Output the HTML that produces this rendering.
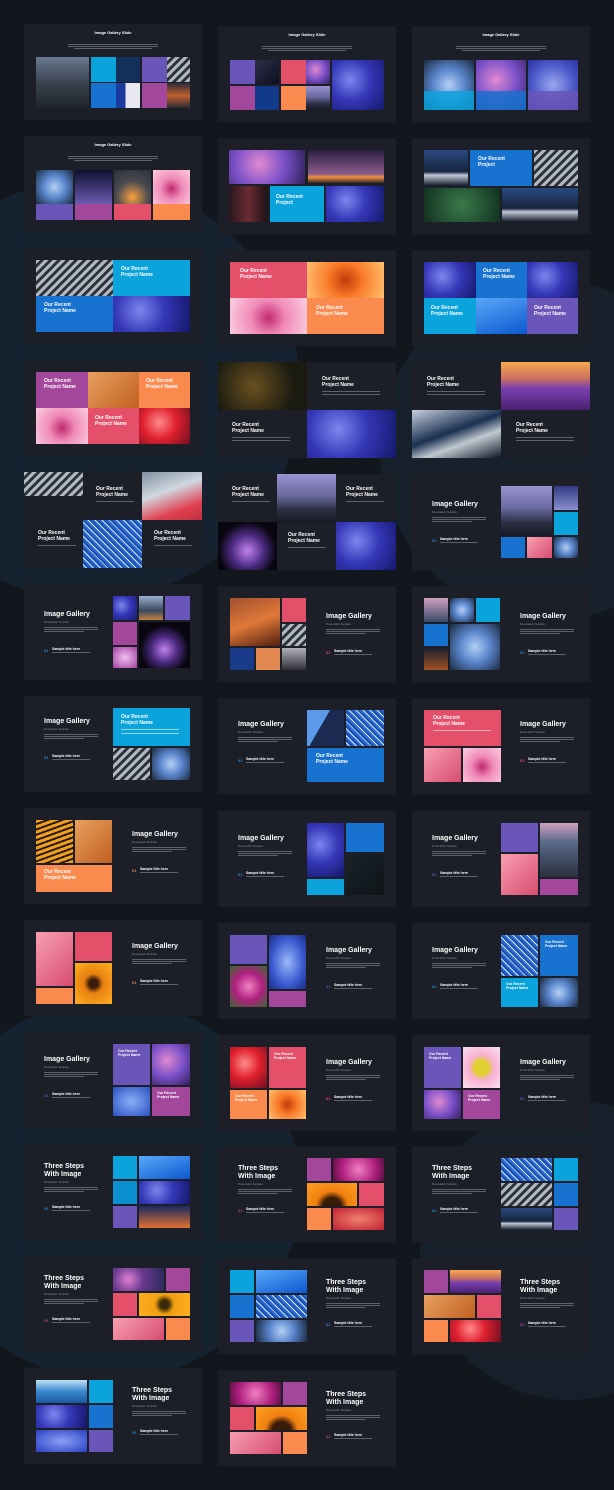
<!DOCTYPE html>
<html><head><meta charset="utf-8"><style>
*{margin:0;padding:0;box-sizing:border-box}
body{width:614px;height:1490px;overflow:hidden;background:#12161d;position:relative;font-family:"Liberation Sans",sans-serif}
.bg{position:absolute;border-radius:50%}
.s{position:absolute;width:178px;height:96px;background:#1c1f27;overflow:hidden}
.s div{position:absolute}
.h{color:#fff;font-weight:bold;font-size:7px;line-height:8px;white-space:nowrap}
.h2{color:#fff;font-weight:bold;font-size:3.5px;white-space:nowrap}
.hs{color:#fff;font-weight:bold;font-size:5px;line-height:6px;white-space:nowrap}
.sub{color:#8a8e98;font-size:2.5px;white-space:nowrap}
.ln{height:1px;background:#5d616b}
.lw{height:1px;background:rgba(255,255,255,.55)}
.n{font-size:4px;font-weight:bold;color:#2a8ad0}
.C{background:#0ba3dc}.B{background:#1872cf}.P{background:#6a55b8}.M{background:#a3479d}.R{background:#e4506a}.O{background:#fb8a4e}
.fb{background:radial-gradient(circle at 35% 40%,#7d86ee,#3538b8 45%,#14186a)}
.hy{background:radial-gradient(circle at 50% 50%,#b4d0f4,#5a86cc 45%,#1a2a40)}
.mt{background:linear-gradient(#9a92d0,#6a6aa0 45%,#2a2e40 75%,#161a28)}
.dk{background:linear-gradient(135deg,#2a2e48,#0e1020)}
.gr{background:repeating-linear-gradient(135deg,#b0b6c0 0 3px,#2a3038 3px 6px)}
.pk{background:radial-gradient(circle at 50% 55%,#c02a70,#f08ab8 40%,#fbd0e0)}
.pp{background:linear-gradient(135deg,#f7a0b0,#d84c70)}
.or{background:radial-gradient(circle,#c03a08,#f87a28 40%,#ffc070)}
.su{background:radial-gradient(circle,#3a1a08 15%,#e88010 35%,#ffb020)}
.rf{background:radial-gradient(circle at 40% 40%,#ff8a8a,#e02030 45%,#701020)}
.bl{background:linear-gradient(160deg,#5aa8f8,#0a58d0)}
.bb{background:repeating-linear-gradient(45deg,#2a6ad0 0 2px,#cfe4ff 2px 3px,#1a50b0 3px 5px)}
.lv{background:linear-gradient(#f8a850,#c87060 35%,#7a40b0 55%,#4a2070)}
.pg{background:radial-gradient(circle at 40% 40%,#e08ad0,#7a50c8 50%,#30205a)}
.sky{background:linear-gradient(#2a2040,#8a5a8a 70%,#f09040 80%,#101828)}
.og{background:linear-gradient(135deg,#e8a060,#c06020)}
.gn{background:radial-gradient(circle,#3a7a4a,#123020)}
.nm{background:linear-gradient(#2a4a80,#16243e 60%,#c0c8d8 70%,#101828)}
.cy{background:linear-gradient(160deg,#a05030,#e07838 50%,#502010)}
</style></head><body>
<div class="bg" style="left:-120px;top:180px;width:420px;height:420px;background:#16222f"></div>
<div class="bg" style="left:380px;top:280px;width:340px;height:340px;background:#17212c"></div>
<div class="bg" style="left:-80px;top:1000px;width:380px;height:380px;background:#152330"></div>
<div class="bg" style="left:420px;top:1100px;width:300px;height:300px;background:#16202b"></div>

<!-- Row 0 -->
<div class="s" style="left:24px;top:24px">
<div class="hs" style="left:0;width:178px;text-align:center;top:6px;font-size:4px">Image Gallery Slide</div>
<div class="ln" style="left:44px;top:20px;width:90px"></div><div class="ln" style="left:44px;top:22px;width:90px"></div><div class="ln" style="left:50px;top:24px;width:78px"></div>
<div class="mt" style="left:12px;top:33px;width:53px;height:51px;background:linear-gradient(#6a7890,#3a4450 50%,#1e2428)"></div>
<div class="C" style="left:67px;top:33px;width:25px;height:25px"></div><div class="dk" style="left:92px;top:33px;width:24px;height:25px;background:#12305a"></div>
<div class="P" style="left:118px;top:33px;width:25px;height:25px"></div><div class="gr" style="left:143px;top:33px;width:23px;height:25px"></div>
<div class="B" style="left:67px;top:59px;width:25px;height:25px"></div><div style="left:92px;top:59px;width:24px;height:25px;background:linear-gradient(90deg,#1a3aa0 40%,#e8e8f0 40%)"></div>
<div class="M" style="left:118px;top:59px;width:25px;height:25px"></div><div style="left:143px;top:59px;width:23px;height:25px;background:linear-gradient(#2a2a38,#c06030 50%,#2a2a30)"></div>
</div>
<div class="s" style="left:218px;top:26px">
<div class="hs" style="left:0;width:178px;text-align:center;top:6px;font-size:4px">Image Gallery Slide</div>
<div class="ln" style="left:44px;top:20px;width:90px"></div><div class="ln" style="left:44px;top:22px;width:90px"></div><div class="ln" style="left:50px;top:24px;width:78px"></div>
<div class="P" style="left:12px;top:34px;width:25px;height:24px"></div><div class="dk" style="left:37px;top:34px;width:24px;height:24px"></div>
<div class="R" style="left:63px;top:34px;width:25px;height:24px"></div><div class="pg" style="left:88px;top:34px;width:24px;height:24px"></div>
<div class="M" style="left:12px;top:60px;width:25px;height:24px"></div><div class="bl" style="left:37px;top:60px;width:24px;height:24px;background:#123a8a"></div>
<div class="O" style="left:63px;top:60px;width:25px;height:24px"></div><div class="mt" style="left:88px;top:60px;width:24px;height:24px"></div>
<div class="fb" style="left:114px;top:34px;width:52px;height:50px"></div>
</div>
<div class="s" style="left:412px;top:26px">
<div class="hs" style="left:0;width:178px;text-align:center;top:6px;font-size:4px">Image Gallery Slide</div>
<div class="ln" style="left:44px;top:20px;width:90px"></div><div class="ln" style="left:44px;top:22px;width:90px"></div><div class="ln" style="left:50px;top:24px;width:78px"></div>
<div class="hy" style="left:12px;top:34px;width:50px;height:50px"></div><div class="pg" style="left:64px;top:34px;width:50px;height:50px"></div><div class="fb" style="left:116px;top:34px;width:50px;height:50px;background:radial-gradient(circle,#9aa8f0,#4a58c8 60%,#2a30a0)"></div>
<div style="left:12px;top:65px;width:50px;height:19px;background:rgba(11,163,220,.85)"></div><div style="left:64px;top:65px;width:50px;height:19px;background:rgba(24,114,207,.85)"></div><div style="left:116px;top:65px;width:50px;height:19px;background:rgba(106,85,184,.85)"></div>
</div>

<!-- Row 1 -->
<div class="s" style="left:24px;top:136px">
<div class="hs" style="left:0;width:178px;text-align:center;top:6px;font-size:4px">Image Gallery Slide</div>
<div class="ln" style="left:44px;top:20px;width:90px"></div><div class="ln" style="left:44px;top:22px;width:90px"></div><div class="ln" style="left:50px;top:24px;width:78px"></div>
<div class="hy" style="left:12px;top:34px;width:37px;height:34px"></div><div class="P" style="left:12px;top:68px;width:37px;height:16px"></div>
<div class="dk" style="left:51px;top:34px;width:37px;height:34px;background:linear-gradient(#101030,#6a5ab0)"></div><div class="M" style="left:51px;top:68px;width:37px;height:16px"></div>
<div style="left:90px;top:34px;width:37px;height:34px;background:radial-gradient(circle at 50% 80%,#f8a040,#4a4a50 50%,#2a3038)"></div><div class="R" style="left:90px;top:68px;width:37px;height:16px"></div>
<div class="pk" style="left:129px;top:34px;width:37px;height:34px"></div><div class="O" style="left:129px;top:68px;width:37px;height:16px"></div>
</div>
<div class="s" style="left:218px;top:138px">
<div class="pg" style="left:11px;top:12px;width:76px;height:34px"></div><div class="sky" style="left:90px;top:12px;width:76px;height:34px"></div>
<div style="left:11px;top:48px;width:39px;height:36px;background:linear-gradient(90deg,#2a1820,#6a2a30,#1a1418)"></div>
<div class="C" style="left:52px;top:48px;width:54px;height:36px"></div><div class="hs" style="left:58px;top:56px">Our Recent<br>Project</div>
<div class="fb" style="left:108px;top:48px;width:58px;height:36px"></div>
</div>
<div class="s" style="left:412px;top:138px">
<div class="nm" style="left:12px;top:12px;width:44px;height:36px"></div><div class="B" style="left:58px;top:12px;width:62px;height:36px"></div><div class="hs" style="left:66px;top:18px">Our Recent<br>Project</div>
<div class="gr" style="left:122px;top:12px;width:44px;height:36px"></div>
<div class="gn" style="left:12px;top:50px;width:76px;height:34px"></div><div class="nm" style="left:90px;top:50px;width:76px;height:34px"></div>
</div>

<!-- Row 2 -->
<div class="s" style="left:24px;top:248px">
<div class="gr" style="left:12px;top:12px;width:77px;height:36px"></div><div class="C" style="left:89px;top:12px;width:77px;height:36px"></div><div class="hs" style="left:97px;top:18px">Our Recent<br>Project Name</div>
<div class="B" style="left:12px;top:48px;width:77px;height:36px"></div><div class="hs" style="left:20px;top:54px">Our Recent<br>Project Name</div><div class="fb" style="left:89px;top:48px;width:77px;height:36px"></div>
</div>
<div class="s" style="left:218px;top:250px">
<div class="R" style="left:12px;top:12px;width:77px;height:36px"></div><div class="hs" style="left:22px;top:18px">Our Recent<br>Project Name</div><div class="or" style="left:89px;top:12px;width:77px;height:36px"></div>
<div class="pk" style="left:12px;top:48px;width:77px;height:36px"></div><div class="O" style="left:89px;top:48px;width:77px;height:36px"></div><div class="hs" style="left:98px;top:55px">Our Recent<br>Project Name</div>
</div>
<div class="s" style="left:412px;top:250px">
<div class="fb" style="left:12px;top:12px;width:52px;height:36px"></div><div class="B" style="left:64px;top:12px;width:51px;height:36px"></div><div class="hs" style="left:71px;top:18px">Our Recent<br>Project Name</div><div class="fb" style="left:115px;top:12px;width:51px;height:36px"></div>
<div class="C" style="left:12px;top:48px;width:52px;height:36px"></div><div class="hs" style="left:19px;top:55px">Our Recent<br>Project Name</div><div class="bl" style="left:64px;top:48px;width:51px;height:36px"></div><div class="P" style="left:115px;top:48px;width:51px;height:36px"></div><div class="hs" style="left:122px;top:55px">Our Recent<br>Project Name</div>
</div>

<!-- Row 3 -->
<div class="s" style="left:24px;top:360px">
<div class="M" style="left:12px;top:12px;width:52px;height:36px"></div><div class="hs" style="left:20px;top:18px">Our Recent<br>Project Name</div><div class="og" style="left:64px;top:12px;width:51px;height:36px"></div><div class="O" style="left:115px;top:12px;width:51px;height:36px"></div><div class="hs" style="left:122px;top:18px">Our Recent<br>Project Name</div>
<div class="pk" style="left:12px;top:48px;width:52px;height:36px"></div><div class="R" style="left:64px;top:48px;width:51px;height:36px"></div><div class="hs" style="left:71px;top:55px">Our Recent<br>Project Name</div><div class="rf" style="left:115px;top:48px;width:51px;height:36px"></div>
</div>
<div class="s" style="left:218px;top:362px">
<div style="left:0;top:0;width:89px;height:48px;background:radial-gradient(circle at 40% 50%,#6a5020,#1a1a10 70%)"></div><div class="hs" style="left:104px;top:14px">Our Recent<br>Project Name</div>
<div class="ln" style="left:104px;top:29px;width:58px"></div><div class="ln" style="left:104px;top:32px;width:58px"></div>
<div class="hs" style="left:14px;top:60px">Our Recent<br>Project Name</div><div class="ln" style="left:14px;top:75px;width:58px"></div><div class="ln" style="left:14px;top:78px;width:58px"></div>
<div class="fb" style="left:89px;top:48px;width:89px;height:48px"></div>
</div>
<div class="s" style="left:412px;top:362px">
<div class="hs" style="left:15px;top:14px">Our Recent<br>Project Name</div><div class="ln" style="left:15px;top:29px;width:58px"></div><div class="ln" style="left:15px;top:32px;width:58px"></div>
<div class="lv" style="left:89px;top:0;width:89px;height:48px"></div>
<div class="nm" style="left:0;top:48px;width:89px;height:48px;background:linear-gradient(160deg,#c8d0e0,#1a3050 45%,#c0c8d0 65%,#101828)"></div>
<div class="hs" style="left:104px;top:60px">Our Recent<br>Project Name</div><div class="ln" style="left:104px;top:75px;width:58px"></div><div class="ln" style="left:104px;top:78px;width:58px"></div>
</div>

<!-- Row 4 -->
<div class="s" style="left:24px;top:472px">
<div class="gr" style="left:0;top:0;width:59px;height:24px"></div><div class="hs" style="left:72px;top:14px">Our Recent<br>Project Name</div>
<div style="left:118px;top:0;width:60px;height:48px;background:linear-gradient(160deg,#8090a0,#d0d8e0 40%,#e04050 75%,#c03040)"></div>
<div class="hs" style="left:14px;top:58px">Our Recent<br>Project Name</div><div class="bb" style="left:59px;top:48px;width:59px;height:48px"></div><div class="hs" style="left:130px;top:58px">Our Recent<br>Project Name</div>
<div class="ln" style="left:14px;top:73px;width:38px"></div><div class="ln" style="left:130px;top:73px;width:38px"></div><div class="ln" style="left:72px;top:29px;width:38px"></div>
</div>
<div class="s" style="left:218px;top:474px">
<div class="hs" style="left:14px;top:12px">Our Recent<br>Project Name</div><div class="mt" style="left:59px;top:0;width:59px;height:48px"></div><div class="hs" style="left:128px;top:12px">Our Recent<br>Project Name</div>
<div style="left:0;top:48px;width:59px;height:48px;background:radial-gradient(circle at 50% 60%,#c080f0,#4a2a80 40%,#08060e 70%)"></div><div class="hs" style="left:70px;top:58px">Our Recent<br>Project Name</div><div class="fb" style="left:118px;top:48px;width:60px;height:48px"></div>
<div class="ln" style="left:14px;top:27px;width:38px"></div><div class="ln" style="left:128px;top:27px;width:38px"></div><div class="ln" style="left:70px;top:73px;width:38px"></div>
</div>
<div class="s" style="left:412px;top:474px">
<div class="h" style="left:20px;top:27px">Image Gallery</div><div class="sub" style="left:20px;top:37px">Presentation Template</div>
<div class="ln" style="left:20px;top:43px;width:54px"></div><div class="ln" style="left:20px;top:45px;width:54px"></div><div class="ln" style="left:20px;top:47px;width:40px"></div>
<div class="n" style="left:20px;top:64px">01</div><div class="h2" style="left:28px;top:63px">Sample title here</div><div class="ln" style="left:28px;top:68px;width:38px"></div>
<div class="mt" style="left:89px;top:12px;width:51px;height:49px"></div><div class="dk" style="left:142px;top:12px;width:24px;height:24px;background:linear-gradient(#303a80,#8a90d0)"></div><div class="C" style="left:142px;top:38px;width:24px;height:23px"></div>
<div class="B" style="left:89px;top:63px;width:24px;height:21px"></div><div class="pp" style="left:115px;top:63px;width:25px;height:21px"></div><div class="hy" style="left:142px;top:63px;width:24px;height:21px"></div>
</div>

<!-- Row 5 -->
<div class="s" style="left:24px;top:584px">
<div class="h" style="left:20px;top:27px">Image Gallery</div><div class="sub" style="left:20px;top:37px">Presentation Template</div>
<div class="ln" style="left:20px;top:43px;width:54px"></div><div class="ln" style="left:20px;top:45px;width:54px"></div><div class="ln" style="left:20px;top:47px;width:40px"></div>
<div class="n" style="left:20px;top:64px">01</div><div class="h2" style="left:28px;top:63px">Sample title here</div><div class="ln" style="left:28px;top:68px;width:38px"></div>
<div class="fb" style="left:89px;top:12px;width:24px;height:24px"></div><div class="mt" style="left:115px;top:12px;width:24px;height:24px;background:linear-gradient(#9ab0d0,#3a4a60 60%,#c08040)"></div><div class="P" style="left:141px;top:12px;width:25px;height:24px"></div>
<div class="M" style="left:89px;top:38px;width:24px;height:23px"></div><div style="left:115px;top:38px;width:51px;height:46px;background:radial-gradient(circle at 50% 60%,#c080f0,#4a2a80 35%,#08060e 65%)"></div>
<div class="pk" style="left:89px;top:63px;width:24px;height:21px;background:radial-gradient(#f0c0f0,#a040a0)"></div>
</div>
<div class="s" style="left:218px;top:586px">
<div class="cy" style="left:12px;top:12px;width:50px;height:48px"></div><div class="R" style="left:64px;top:12px;width:24px;height:24px"></div><div class="gr" style="left:64px;top:38px;width:24px;height:22px"></div>
<div class="dk" style="left:12px;top:62px;width:24px;height:22px;background:#1a3a8a"></div><div class="O" style="left:38px;top:62px;width:24px;height:22px;background:#e08850"></div><div class="gr" style="left:64px;top:62px;width:24px;height:22px;background:linear-gradient(#b0b0b8,#303038)"></div>
<div class="h" style="left:108px;top:27px">Image Gallery</div><div class="sub" style="left:108px;top:37px">Presentation Template</div>
<div class="ln" style="left:108px;top:43px;width:54px"></div><div class="ln" style="left:108px;top:45px;width:54px"></div><div class="ln" style="left:108px;top:47px;width:40px"></div>
<div class="n" style="left:108px;top:64px;color:#e04a6a">01</div><div class="h2" style="left:116px;top:63px">Sample title here</div><div class="ln" style="left:116px;top:68px;width:38px"></div>
</div>
<div class="s" style="left:412px;top:586px">
<div class="mt" style="left:12px;top:12px;width:24px;height:24px;background:linear-gradient(#d0a0c0,#3a4a6a)"></div><div class="hy" style="left:38px;top:12px;width:24px;height:24px"></div><div class="C" style="left:64px;top:12px;width:24px;height:24px"></div>
<div class="B" style="left:12px;top:38px;width:24px;height:22px"></div><div class="dk" style="left:12px;top:62px;width:24px;height:22px;background:linear-gradient(#1a2030,#a05020)"></div>
<div class="hy" style="left:38px;top:38px;width:50px;height:46px"></div>
<div class="h" style="left:108px;top:27px">Image Gallery</div><div class="sub" style="left:108px;top:37px">Presentation Template</div>
<div class="ln" style="left:108px;top:43px;width:54px"></div><div class="ln" style="left:108px;top:45px;width:54px"></div><div class="ln" style="left:108px;top:47px;width:40px"></div>
<div class="n" style="left:108px;top:64px">01</div><div class="h2" style="left:116px;top:63px">Sample title here</div><div class="ln" style="left:116px;top:68px;width:38px"></div>
</div>

<!-- Row 6 -->
<div class="s" style="left:24px;top:696px">
<div class="h" style="left:20px;top:22px">Image Gallery</div><div class="sub" style="left:20px;top:32px">Presentation Template</div>
<div class="ln" style="left:20px;top:38px;width:54px"></div><div class="ln" style="left:20px;top:40px;width:54px"></div><div class="ln" style="left:20px;top:42px;width:40px"></div>
<div class="n" style="left:20px;top:59px">01</div><div class="h2" style="left:28px;top:58px">Sample title here</div><div class="ln" style="left:28px;top:63px;width:38px"></div>
<div class="C" style="left:89px;top:12px;width:77px;height:38px"></div><div class="hs" style="left:97px;top:18px">Our Recent<br>Project Name</div><div class="lw" style="left:97px;top:33px;width:58px"></div><div class="lw" style="left:97px;top:37px;width:58px"></div>
<div class="gr" style="left:89px;top:52px;width:37px;height:32px"></div><div class="hy" style="left:128px;top:52px;width:38px;height:32px"></div>
</div>
<div class="s" style="left:218px;top:698px">
<div class="h" style="left:20px;top:23px">Image Gallery</div><div class="sub" style="left:20px;top:33px">Presentation Template</div>
<div class="ln" style="left:20px;top:39px;width:54px"></div><div class="ln" style="left:20px;top:41px;width:54px"></div><div class="ln" style="left:20px;top:43px;width:40px"></div>
<div class="n" style="left:20px;top:60px">01</div><div class="h2" style="left:28px;top:59px">Sample title here</div><div class="ln" style="left:28px;top:64px;width:38px"></div>
<div class="bl" style="left:89px;top:12px;width:37px;height:36px;background:linear-gradient(120deg,#5a9ae8 40%,#1a2a50 40%)"></div><div class="bb" style="left:128px;top:12px;width:38px;height:36px"></div>
<div class="B" style="left:89px;top:50px;width:77px;height:34px"></div><div class="hs" style="left:98px;top:55px">Our Recent<br>Project Name</div>
</div>
<div class="s" style="left:412px;top:698px">
<div class="R" style="left:12px;top:12px;width:77px;height:36px"></div><div class="hs" style="left:21px;top:17px">Our Recent<br>Project Name</div><div class="lw" style="left:21px;top:32px;width:58px"></div>
<div class="pp" style="left:12px;top:50px;width:37px;height:34px"></div><div class="pk" style="left:51px;top:50px;width:38px;height:34px"></div>
<div class="h" style="left:108px;top:23px">Image Gallery</div><div class="sub" style="left:108px;top:33px">Presentation Template</div>
<div class="ln" style="left:108px;top:39px;width:54px"></div><div class="ln" style="left:108px;top:41px;width:54px"></div><div class="ln" style="left:108px;top:43px;width:40px"></div>
<div class="n" style="left:108px;top:60px;color:#e04a6a">01</div><div class="h2" style="left:116px;top:59px">Sample title here</div><div class="ln" style="left:116px;top:64px;width:38px"></div>
</div>

<!-- Row 7 -->
<div class="s" style="left:24px;top:808px">
<div style="left:12px;top:12px;width:37px;height:43px;background:repeating-linear-gradient(160deg,#f0a020 0 3px,#2a1a08 3px 5px)"></div><div class="og" style="left:51px;top:12px;width:37px;height:43px"></div>
<div class="O" style="left:12px;top:57px;width:76px;height:27px"></div><div class="hs" style="left:20px;top:61px">Our Recent<br>Project Name</div>
<div class="h" style="left:108px;top:23px">Image Gallery</div><div class="sub" style="left:108px;top:33px">Presentation Template</div>
<div class="ln" style="left:108px;top:39px;width:54px"></div><div class="ln" style="left:108px;top:41px;width:54px"></div><div class="ln" style="left:108px;top:43px;width:40px"></div>
<div class="n" style="left:108px;top:60px;color:#f08a4e">01</div><div class="h2" style="left:116px;top:59px">Sample title here</div><div class="ln" style="left:116px;top:64px;width:38px"></div>
</div>
<div class="s" style="left:218px;top:811px">
<div class="h" style="left:20px;top:24px">Image Gallery</div><div class="sub" style="left:20px;top:34px">Presentation Template</div>
<div class="ln" style="left:20px;top:40px;width:54px"></div><div class="ln" style="left:20px;top:42px;width:54px"></div><div class="ln" style="left:20px;top:44px;width:40px"></div>
<div class="n" style="left:20px;top:61px">01</div><div class="h2" style="left:28px;top:60px">Sample title here</div><div class="ln" style="left:28px;top:65px;width:38px"></div>
<div class="fb" style="left:89px;top:12px;width:37px;height:54px"></div><div class="B" style="left:128px;top:12px;width:38px;height:29px"></div>
<div class="dk" style="left:128px;top:43px;width:38px;height:41px;background:linear-gradient(135deg,#1a2228,#0e1418)"></div><div class="C" style="left:89px;top:68px;width:37px;height:16px"></div>
</div>
<div class="s" style="left:412px;top:811px">
<div class="h" style="left:20px;top:24px">Image Gallery</div><div class="sub" style="left:20px;top:34px">Presentation Template</div>
<div class="ln" style="left:20px;top:40px;width:54px"></div><div class="ln" style="left:20px;top:42px;width:54px"></div><div class="ln" style="left:20px;top:44px;width:40px"></div>
<div class="n" style="left:20px;top:61px;color:#6a55b8">01</div><div class="h2" style="left:28px;top:60px">Sample title here</div><div class="ln" style="left:28px;top:65px;width:38px"></div>
<div class="P" style="left:89px;top:12px;width:37px;height:29px"></div><div class="mt" style="left:128px;top:12px;width:38px;height:54px;background:linear-gradient(#d0a0c0,#5a6a8a 35%,#2a3040)"></div>
<div class="pp" style="left:89px;top:43px;width:37px;height:41px"></div><div class="M" style="left:128px;top:68px;width:38px;height:16px"></div>
</div>

<!-- Row 8 -->
<div class="s" style="left:24px;top:920px">
<div class="pp" style="left:12px;top:12px;width:37px;height:54px"></div><div class="R" style="left:51px;top:12px;width:37px;height:29px"></div>
<div class="O" style="left:12px;top:68px;width:37px;height:16px"></div><div class="su" style="left:51px;top:43px;width:37px;height:41px"></div>
<div class="h" style="left:108px;top:23px">Image Gallery</div><div class="sub" style="left:108px;top:33px">Presentation Template</div>
<div class="ln" style="left:108px;top:39px;width:54px"></div><div class="ln" style="left:108px;top:41px;width:54px"></div><div class="ln" style="left:108px;top:43px;width:40px"></div>
<div class="n" style="left:108px;top:60px;color:#f08a4e">01</div><div class="h2" style="left:116px;top:59px">Sample title here</div><div class="ln" style="left:116px;top:64px;width:38px"></div>
</div>
<div class="s" style="left:218px;top:923px">
<div class="P" style="left:12px;top:12px;width:37px;height:29px"></div><div class="hy" style="left:51px;top:12px;width:37px;height:54px;background:radial-gradient(#9ab8f8,#3a5ad0 60%,#1a2a80)"></div>
<div style="left:12px;top:43px;width:37px;height:41px;background:radial-gradient(circle,#f080c0,#b02080 50%,#3a6a30)"></div><div class="M" style="left:51px;top:68px;width:37px;height:16px"></div>
<div class="h" style="left:108px;top:24px">Image Gallery</div><div class="sub" style="left:108px;top:34px">Presentation Template</div>
<div class="ln" style="left:108px;top:40px;width:54px"></div><div class="ln" style="left:108px;top:42px;width:54px"></div><div class="ln" style="left:108px;top:44px;width:40px"></div>
<div class="n" style="left:108px;top:61px;color:#6a55b8">01</div><div class="h2" style="left:116px;top:60px">Sample title here</div><div class="ln" style="left:116px;top:65px;width:38px"></div>
</div>
<div class="s" style="left:412px;top:923px">
<div class="h" style="left:20px;top:24px">Image Gallery</div><div class="sub" style="left:20px;top:34px">Presentation Template</div>
<div class="ln" style="left:20px;top:40px;width:54px"></div><div class="ln" style="left:20px;top:42px;width:54px"></div><div class="ln" style="left:20px;top:44px;width:40px"></div>
<div class="n" style="left:20px;top:61px">01</div><div class="h2" style="left:28px;top:60px">Sample title here</div><div class="ln" style="left:28px;top:65px;width:38px"></div>
<div class="bb" style="left:89px;top:12px;width:37px;height:41px"></div><div class="B" style="left:128px;top:12px;width:38px;height:41px"></div><div class="hs" style="left:133px;top:17px;font-size:3.5px;line-height:4px">Our Recent<br>Project Name</div>
<div class="C" style="left:89px;top:55px;width:37px;height:29px"></div><div class="hs" style="left:94px;top:59px;font-size:3.5px;line-height:4px">Our Recent<br>Project Name</div><div class="hy" style="left:128px;top:55px;width:38px;height:29px"></div>
</div>

<!-- Row 9 -->
<div class="s" style="left:24px;top:1032px">
<div class="h" style="left:20px;top:24px">Image Gallery</div><div class="sub" style="left:20px;top:34px">Presentation Template</div>
<div class="ln" style="left:20px;top:40px;width:54px"></div><div class="ln" style="left:20px;top:42px;width:54px"></div><div class="ln" style="left:20px;top:44px;width:40px"></div>
<div class="n" style="left:20px;top:61px;color:#6a55b8">01</div><div class="h2" style="left:28px;top:60px">Sample title here</div><div class="ln" style="left:28px;top:65px;width:38px"></div>
<div class="P" style="left:89px;top:12px;width:37px;height:41px"></div><div class="hs" style="left:94px;top:17px;font-size:3.5px;line-height:4px">Our Recent<br>Project Name</div><div class="pg" style="left:128px;top:12px;width:38px;height:41px"></div>
<div class="fb" style="left:89px;top:55px;width:37px;height:29px;background:radial-gradient(#8ab0f8,#2a50c0)"></div><div class="M" style="left:128px;top:55px;width:38px;height:29px"></div><div class="hs" style="left:133px;top:59px;font-size:3.5px;line-height:4px">Our Recent<br>Project Name</div>
</div>
<div class="s" style="left:218px;top:1035px">
<div class="rf" style="left:12px;top:12px;width:37px;height:41px"></div><div class="R" style="left:51px;top:12px;width:37px;height:41px"></div><div class="hs" style="left:56px;top:17px;font-size:3.5px;line-height:4px">Our Recent<br>Project Name</div>
<div class="O" style="left:12px;top:55px;width:37px;height:29px"></div><div class="hs" style="left:17px;top:59px;font-size:3.5px;line-height:4px">Our Recent<br>Project Name</div><div class="or" style="left:51px;top:55px;width:37px;height:29px"></div>
<div class="h" style="left:108px;top:24px">Image Gallery</div><div class="sub" style="left:108px;top:34px">Presentation Template</div>
<div class="ln" style="left:108px;top:40px;width:54px"></div><div class="ln" style="left:108px;top:42px;width:54px"></div><div class="ln" style="left:108px;top:44px;width:40px"></div>
<div class="n" style="left:108px;top:61px;color:#e04a6a">01</div><div class="h2" style="left:116px;top:60px">Sample title here</div><div class="ln" style="left:116px;top:65px;width:38px"></div>
</div>
<div class="s" style="left:412px;top:1035px">
<div class="P" style="left:12px;top:12px;width:37px;height:41px"></div><div class="hs" style="left:17px;top:17px;font-size:3.5px;line-height:4px">Our Recent<br>Project Name</div><div style="left:51px;top:12px;width:37px;height:41px;background:radial-gradient(circle,#e0d030 25%,#f8b0d0 45%,#fbe0f0)"></div>
<div class="pg" style="left:12px;top:55px;width:37px;height:29px"></div><div class="M" style="left:51px;top:55px;width:37px;height:29px"></div><div class="hs" style="left:56px;top:59px;font-size:3.5px;line-height:4px">Our Recent<br>Project Name</div>
<div class="h" style="left:108px;top:24px">Image Gallery</div><div class="sub" style="left:108px;top:34px">Presentation Template</div>
<div class="ln" style="left:108px;top:40px;width:54px"></div><div class="ln" style="left:108px;top:42px;width:54px"></div><div class="ln" style="left:108px;top:44px;width:40px"></div>
<div class="n" style="left:108px;top:61px;color:#6a55b8">01</div><div class="h2" style="left:116px;top:60px">Sample title here</div><div class="ln" style="left:116px;top:65px;width:38px"></div>
</div>

<!-- Row 10: Three Steps -->
<div class="s" style="left:24px;top:1144px">
<div class="h" style="left:20px;top:19px">Three Steps<br>With Image</div><div class="sub" style="left:20px;top:37px">Presentation Template</div>
<div class="ln" style="left:20px;top:43px;width:54px"></div><div class="ln" style="left:20px;top:45px;width:54px"></div><div class="ln" style="left:20px;top:47px;width:40px"></div>
<div class="n" style="left:20px;top:62px">01</div><div class="h2" style="left:28px;top:61px">Sample title here</div><div class="ln" style="left:28px;top:66px;width:38px"></div>
<div class="C" style="left:89px;top:12px;width:24px;height:23px"></div><div class="bl" style="left:115px;top:12px;width:51px;height:23px"></div>
<div class="C" style="left:89px;top:37px;width:24px;height:23px;background:#0a90d0"></div><div class="fb" style="left:115px;top:37px;width:51px;height:23px"></div>
<div class="P" style="left:89px;top:62px;width:24px;height:22px"></div><div class="cy" style="left:115px;top:62px;width:51px;height:22px;background:linear-gradient(#1a2a60,#e07030)"></div>
</div>
<div class="s" style="left:218px;top:1146px">
<div class="h" style="left:20px;top:19px">Three Steps<br>With Image</div><div class="sub" style="left:20px;top:37px">Presentation Template</div>
<div class="ln" style="left:20px;top:43px;width:54px"></div><div class="ln" style="left:20px;top:45px;width:54px"></div><div class="ln" style="left:20px;top:47px;width:40px"></div>
<div class="n" style="left:20px;top:62px;color:#a3479d">01</div><div class="h2" style="left:28px;top:61px">Sample title here</div><div class="ln" style="left:28px;top:66px;width:38px"></div>
<div class="M" style="left:89px;top:12px;width:24px;height:23px"></div><div style="left:115px;top:12px;width:51px;height:23px;background:radial-gradient(circle,#f080c0,#b02080 60%,#5a1040)"></div>
<div class="su" style="left:89px;top:37px;width:50px;height:23px;background:radial-gradient(ellipse at 50% 100%,#3a1a08 25%,#f08010 45%,#ffa020)"></div><div class="R" style="left:141px;top:37px;width:25px;height:23px"></div>
<div class="O" style="left:89px;top:62px;width:24px;height:22px"></div><div class="rf" style="left:115px;top:62px;width:51px;height:22px;background:radial-gradient(#f08070,#c02030)"></div>
</div>
<div class="s" style="left:412px;top:1146px">
<div class="h" style="left:20px;top:19px">Three Steps<br>With Image</div><div class="sub" style="left:20px;top:37px">Presentation Template</div>
<div class="ln" style="left:20px;top:43px;width:54px"></div><div class="ln" style="left:20px;top:45px;width:54px"></div><div class="ln" style="left:20px;top:47px;width:40px"></div>
<div class="n" style="left:20px;top:62px">01</div><div class="h2" style="left:28px;top:61px">Sample title here</div><div class="ln" style="left:28px;top:66px;width:38px"></div>
<div class="bb" style="left:89px;top:12px;width:51px;height:23px"></div><div class="C" style="left:142px;top:12px;width:24px;height:23px"></div>
<div class="gr" style="left:89px;top:37px;width:51px;height:23px"></div><div class="B" style="left:142px;top:37px;width:24px;height:23px"></div>
<div class="nm" style="left:89px;top:62px;width:51px;height:22px"></div><div class="P" style="left:142px;top:62px;width:24px;height:22px"></div>
</div>

<!-- Row 11 -->
<div class="s" style="left:24px;top:1256px">
<div class="h" style="left:20px;top:19px">Three Steps<br>With Image</div><div class="sub" style="left:20px;top:37px">Presentation Template</div>
<div class="ln" style="left:20px;top:43px;width:54px"></div><div class="ln" style="left:20px;top:45px;width:54px"></div><div class="ln" style="left:20px;top:47px;width:40px"></div>
<div class="n" style="left:20px;top:62px;color:#a3479d">01</div><div class="h2" style="left:28px;top:61px">Sample title here</div><div class="ln" style="left:28px;top:66px;width:38px"></div>
<div style="left:89px;top:12px;width:51px;height:23px;background:radial-gradient(circle at 30% 50%,#e080d0,#6a3a90 40%,#2a2a5a)"></div><div class="M" style="left:142px;top:12px;width:24px;height:23px"></div>
<div class="R" style="left:89px;top:37px;width:24px;height:23px"></div><div class="su" style="left:115px;top:37px;width:51px;height:23px;background:radial-gradient(circle,#3a2a08 15%,#f0a010 35%,#ffb020)"></div>
<div class="pp" style="left:89px;top:62px;width:51px;height:22px"></div><div class="O" style="left:142px;top:62px;width:24px;height:22px"></div>
</div>
<div class="s" style="left:218px;top:1258px">
<div class="C" style="left:12px;top:12px;width:24px;height:23px"></div><div class="bl" style="left:38px;top:12px;width:51px;height:23px"></div>
<div class="B" style="left:12px;top:37px;width:24px;height:23px"></div><div class="bb" style="left:38px;top:37px;width:51px;height:23px"></div>
<div class="P" style="left:12px;top:62px;width:24px;height:22px"></div><div class="hy" style="left:38px;top:62px;width:51px;height:22px"></div>
<div class="h" style="left:108px;top:21px">Three Steps<br>With Image</div><div class="sub" style="left:108px;top:39px">Presentation Template</div>
<div class="ln" style="left:108px;top:45px;width:54px"></div><div class="ln" style="left:108px;top:47px;width:54px"></div><div class="ln" style="left:108px;top:49px;width:40px"></div>
<div class="n" style="left:108px;top:64px">01</div><div class="h2" style="left:116px;top:63px">Sample title here</div><div class="ln" style="left:116px;top:68px;width:38px"></div>
</div>
<div class="s" style="left:412px;top:1258px">
<div class="M" style="left:12px;top:12px;width:24px;height:23px"></div><div class="lv" style="left:38px;top:12px;width:51px;height:23px"></div>
<div class="og" style="left:12px;top:37px;width:51px;height:23px"></div><div class="R" style="left:65px;top:37px;width:24px;height:23px"></div>
<div class="O" style="left:12px;top:62px;width:24px;height:22px"></div><div class="rf" style="left:38px;top:62px;width:51px;height:22px"></div>
<div class="h" style="left:108px;top:21px">Three Steps<br>With Image</div><div class="sub" style="left:108px;top:39px">Presentation Template</div>
<div class="ln" style="left:108px;top:45px;width:54px"></div><div class="ln" style="left:108px;top:47px;width:54px"></div><div class="ln" style="left:108px;top:49px;width:40px"></div>
<div class="n" style="left:108px;top:64px;color:#a3479d">01</div><div class="h2" style="left:116px;top:63px">Sample title here</div><div class="ln" style="left:116px;top:68px;width:38px"></div>
</div>

<!-- Row 12 -->
<div class="s" style="left:24px;top:1368px">
<div style="left:12px;top:12px;width:51px;height:23px;background:linear-gradient(#c0e0f0,#3a88d0 50%,#1a5aa0)"></div><div class="C" style="left:65px;top:12px;width:24px;height:23px"></div>
<div class="fb" style="left:12px;top:37px;width:51px;height:23px"></div><div class="B" style="left:65px;top:37px;width:24px;height:23px"></div>
<div class="fb" style="left:12px;top:62px;width:51px;height:22px;background:radial-gradient(#8aa0f8,#2a40c0)"></div><div class="P" style="left:65px;top:62px;width:24px;height:22px"></div>
<div class="h" style="left:108px;top:19px">Three Steps<br>With Image</div><div class="sub" style="left:108px;top:37px">Presentation Template</div>
<div class="ln" style="left:108px;top:43px;width:54px"></div><div class="ln" style="left:108px;top:45px;width:54px"></div><div class="ln" style="left:108px;top:47px;width:40px"></div>
<div class="n" style="left:108px;top:62px">01</div><div class="h2" style="left:116px;top:61px">Sample title here</div><div class="ln" style="left:116px;top:66px;width:38px"></div>
</div>
<div class="s" style="left:218px;top:1370px">
<div style="left:12px;top:12px;width:51px;height:23px;background:radial-gradient(circle,#f080c0,#b02080 60%,#5a1040)"></div><div class="M" style="left:65px;top:12px;width:24px;height:23px"></div>
<div class="R" style="left:12px;top:37px;width:24px;height:23px"></div><div class="su" style="left:38px;top:37px;width:51px;height:23px;background:radial-gradient(ellipse at 50% 100%,#3a1a08 25%,#f08010 45%,#ffa020)"></div>
<div class="pp" style="left:12px;top:62px;width:51px;height:22px"></div><div class="O" style="left:65px;top:62px;width:24px;height:22px"></div>
<div class="h" style="left:108px;top:21px">Three Steps<br>With Image</div><div class="sub" style="left:108px;top:39px">Presentation Template</div>
<div class="ln" style="left:108px;top:45px;width:54px"></div><div class="ln" style="left:108px;top:47px;width:54px"></div><div class="ln" style="left:108px;top:49px;width:40px"></div>
<div class="n" style="left:108px;top:64px;color:#a3479d">01</div><div class="h2" style="left:116px;top:63px">Sample title here</div><div class="ln" style="left:116px;top:68px;width:38px"></div>
</div>
</body></html>
